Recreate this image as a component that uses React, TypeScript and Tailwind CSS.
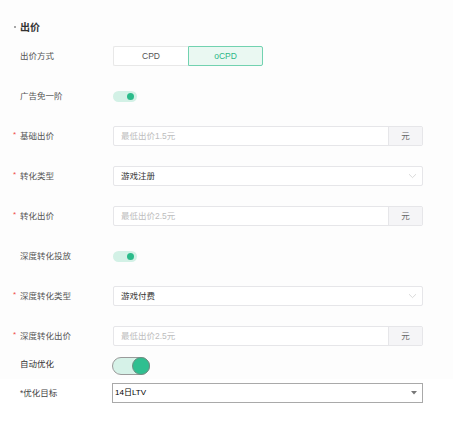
import { ReactNode } from 'react'

const font = { fontFamily: '"Liberation Sans", "Noto Sans CJK SC", sans-serif' }

function Label({ text, required }: { text: string; required?: boolean }) {
  return (
    <div className="w-[113px] shrink-0 flex items-center pl-[13px] text-[8.5px] text-[#555]">
      <span className="w-[7px] text-[#f04b4b] text-[8px] leading-none -mt-[2px]">{required ? '*' : ''}</span>
      <span>{text}</span>
    </div>
  )
}

function Row({ children }: { children: ReactNode }) {
  return <div className="flex items-center h-[20px]">{children}</div>
}

function Toggle() {
  return (
    <div className="w-[24px] h-[11px] rounded-full bg-[#d3f1e6] flex items-center justify-end pr-[3px]">
      <div className="w-[7px] h-[7px] rounded-full bg-[#2bbb8a]" />
    </div>
  )
}

function PriceInput({ placeholder }: { placeholder: string }) {
  return (
    <div className="flex w-[310px] h-[20px] border border-[#e6e6e9] rounded-[2px] bg-white">
      <input
        placeholder={placeholder}
        className="flex-1 min-w-0 px-[7px] text-[8.5px] text-[#333] placeholder:text-[#bdbdbd] outline-none bg-transparent"
      />
      <div className="w-[34px] border-l border-[#e6e6e9] bg-[#f5f5f7] flex items-center justify-center text-[8.5px] text-[#666]">
        元
      </div>
    </div>
  )
}

function Select({ value }: { value: string }) {
  return (
    <div className="flex items-center justify-between w-[310px] h-[20px] border border-[#e6e6e9] rounded-[2px] bg-white pl-[7px] pr-[5px]">
      <span className="text-[8.5px] text-[#333]">{value}</span>
      <svg width="9" height="6" viewBox="0 0 9 6" fill="none">
        <path d="M1 1.2 4.5 4.6 8 1.2" stroke="#cfcfcf" strokeWidth="0.8" />
      </svg>
    </div>
  )
}

export default function App() {
  return (
    <div className="w-[453px] h-[435px] bg-white" style={font}>
      <div className="bg-[#fdfdfd] pt-[19px] pb-[3px]">
        <div className="flex items-center h-[16px] pl-[14px] text-[10px] font-semibold text-[#333]">
          <span className="w-[2px] h-[2px] rounded-full bg-[#888] mr-[4px]" />
          <span>出价</span>
        </div>

        <div className="flex flex-col gap-[20px] mt-[11px]">
          <Row>
            <Label text="出价方式" />
            <div className="flex h-[20px] text-[8.5px]">
              <div className="w-[75px] flex items-center justify-center border border-[#e8e8e8] border-r-0 rounded-l-[2px] bg-white text-[#555]">
                CPD
              </div>
              <div className="w-[75px] flex items-center justify-center border border-[#72d2b0] rounded-r-[2px] bg-[#eaf8f2] text-[#2bb686]">
                oCPD
              </div>
            </div>
          </Row>
          <Row>
            <Label text="广告免一阶" />
            <Toggle />
          </Row>
          <Row>
            <Label text="基础出价" required />
            <PriceInput placeholder="最低出价1.5元" />
          </Row>
          <Row>
            <Label text="转化类型" required />
            <Select value="游戏注册" />
          </Row>
          <Row>
            <Label text="转化出价" required />
            <PriceInput placeholder="最低出价2.5元" />
          </Row>
          <Row>
            <Label text="深度转化投放" />
            <Toggle />
          </Row>
          <Row>
            <Label text="深度转化类型" required />
            <Select value="游戏付费" />
          </Row>
          <Row>
            <Label text="深度转化出价" required />
            <PriceInput placeholder="最低出价2.5元" />
          </Row>
        </div>

        <div className="flex items-start mt-[11px] h-[19px]">
          <div className="w-[112px] shrink-0 pl-[20px] pt-[1px] text-[8.5px] text-[#333]">自动优化</div>
          <div className="w-[38px] h-[18px] rounded-full bg-[#d6f2e8] border border-[#9a9a9a] flex items-center justify-end">
            <div className="w-[18px] h-[18px] -mr-[1px] rounded-full bg-[#2fbf90] border border-[#6f8f83]" />
          </div>
        </div>
      </div>

      <div className="flex items-center mt-[4px] h-[20px]">
        <div className="w-[112px] shrink-0 pl-[20px] text-[8.5px] text-[#444]">*优化目标</div>
        <div className="flex items-center justify-between w-[311px] h-[20px] border border-[#a9a9a9] bg-white pl-[2px] pr-[5px]">
          <span className="text-[8px] text-black">14日LTV</span>
          <svg width="6" height="4" viewBox="0 0 6 4">
            <path d="M0 0h6L3 3.5z" fill="#777" />
          </svg>
        </div>
      </div>
    </div>
  )
}
